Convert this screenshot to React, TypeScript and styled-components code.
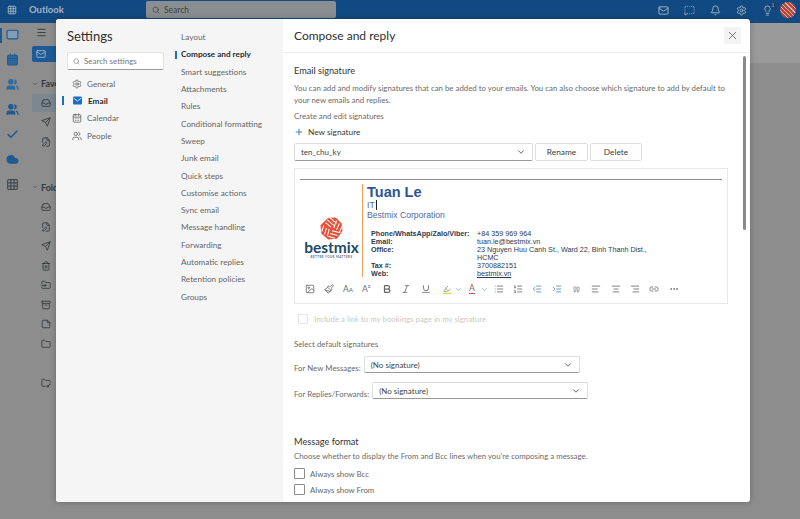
import React from 'react';
import styled, { createGlobalStyle } from 'styled-components';
import {
  AlignCenter, AlignLeft, AlignRight, Archive, Bell, Bold, CalendarDays, Check, ChevronDown, Cloud, FileEdit,
  Folder, FolderInput, FolderKey, Grid3x3, Highlighter, Image, IndentDecrease, IndentIncrease, Inbox, Italic,
  Lightbulb, Link2, List, ListOrdered, Mail, Menu, MessageSquareDashed, MoreHorizontal, Paintbrush, Plus, Quote,
  Search, Send, Settings, StickyNote, Trash2, Underline, Users, X,
} from 'lucide-react';

const GlobalStyle = createGlobalStyle`
  html, body {
    margin: 0;
    height: 100%;
    overflow: hidden;
    font-family: "Lato", "Open Sans", sans-serif;
  }
`;

const Page = styled('div')`
  background-color: #8c8d8c;
  display: flex;
  flex-direction: column;
  height: 519px;
  overflow: hidden;
  position: relative;
  width: 800px;
`;

const TopBar = styled('header')`
  align-items: flex-start;
  background-color: #114a82;
  color: #a9b6c4;
  display: flex;
  flex-shrink: 0;
  height: 23px;
`;

const AppGrid = styled('div')`
  display: flex;
  justify-content: center;
  padding-top: 5px;
  width: 24px;
`;

const Brand = styled('span')`
  color: #a3b3c4;
  font-size: 9.5px;
  font-weight: 700;
  line-height: 20px;
  margin-left: 5px;
  width: 117px;
`;

const TopSearch = styled('div')`
  align-items: center;
  background-color: #8b8e90;
  border-radius: 2px;
  color: #3d3f41;
  display: flex;
  font-size: 8.5px;
  gap: 4px;
  height: 17px;
  margin-top: 1px;
  padding-left: 6px;
  width: 184px;
`;

const TopActions = styled('div')`
  align-items: center;
  display: flex;
  gap: 15px;
  margin-left: auto;
  padding-right: 4px;
  padding-top: 2px;
`;

const BellBadge = styled('span')`
  display: flex;
  position: relative;

  &::after {
    background-color: #1d3f66;
    border-radius: 50%;
    color: #a9b6c4;
    content: '1';
    font-size: 5px;
    height: 7px;
    line-height: 7px;
    position: absolute;
    right: -4px;
    text-align: center;
    top: -3px;
    width: 7px;
  }
`;

const Avatar = styled('span')`
  background: repeating-linear-gradient(45deg, #b4483f 0 2px, #d9b3a8 2px 3px);
  border-radius: 50%;
  display: block;
  height: 16px;
  margin-left: -7.5px;
  width: 16px;
`;

const Workspace = styled('div')`
  display: flex;
  flex: 1;
`;

const Rail = styled('nav')`
  align-items: center;
  display: flex;
  flex-direction: column;
  gap: 10px;
  padding-top: 5px;
  position: relative;
  width: 24px;

  &::before {
    background-color: #1c5a94;
    content: '';
    height: 15px;
    left: 0;
    position: absolute;
    top: 5px;
    width: 1.5px;
  }
`;

const RailIcon = styled('span')<{ $color: string }>`
  color: ${ (props) => props.$color };
  display: flex;
  height: 15px;
`;

const FolderPane = styled('aside')`
  color: #33393d;
  display: flex;
  flex-direction: column;
  padding-left: 8px;
  padding-top: 2px;
  width: 120px;
`;

const Hamburger = styled('span')`
  display: flex;
  padding-left: 4px;
  padding-top: 2px;
`;

const NewMail = styled('div')`
  align-items: center;
  background-color: #1e5a96;
  border-radius: 2px;
  color: #aebfd0;
  display: flex;
  height: 16px;
  margin-top: 8px;
  padding-left: 4px;
  width: 60px;
`;

const GroupLabel = styled('div')<{ $top: number }>`
  align-items: center;
  display: flex;
  font-size: 9px;
  font-weight: 700;
  gap: 3px;
  margin-top: ${ (props) => props.$top }px;
`;

const SideRow = styled('div')<{ $selected?: boolean; $top?: number }>`
  align-items: center;
  background-color: ${ (props) => (props.$selected ? '#7d8790' : 'transparent') };
  border-radius: 2px;
  display: flex;
  height: 17.5px;
  margin-top: ${ (props) => props.$top ?? 2 }px;
  padding-left: 9px;
`;

const ReadingPane = styled('section')`
  display: flex;
  flex: 1;
  flex-direction: column;
`;

const ReadingStrip = styled('div')`
  background-color: #999a99;
  height: 40px;
  margin-left: auto;
  width: 70px;
`;

const Modal = styled('div')`
  background-color: #ffffff;
  border-radius: 3px;
  bottom: 17px;
  box-shadow: 0 0 6px rgba(0, 0, 0, 0.25);
  display: flex;
  left: 56px;
  overflow: hidden;
  position: absolute;
  top: 19px;
  width: 694px;
`;

const NavPane = styled('div')`
  background-color: #f5f5f5;
  display: flex;
  flex-shrink: 0;
  width: 227px;
`;

const PrimaryNav = styled('div')`
  box-sizing: border-box;
  display: flex;
  flex-direction: column;
  padding-left: 11px;
  padding-top: 8px;
  width: 119px;
`;

const SettingsTitle = styled('h1')`
  color: #2f2f2f;
  font-size: 13px;
  font-weight: 400;
  line-height: 18px;
  margin: 0 0 7px;
`;

const NavSearch = styled('div')`
  align-items: center;
  background-color: #ffffff;
  border: 1px solid #e3e3e3;
  border-bottom-color: #9b9b9b;
  border-radius: 2px;
  box-sizing: border-box;
  color: #777777;
  display: flex;
  font-size: 8px;
  gap: 4px;
  height: 18px;
  margin-bottom: 5px;
  padding-left: 5px;
  width: 97px;
`;

const NavItem = styled('div')<{ $active?: boolean }>`
  align-items: center;
  color: ${ (props) => (props.$active ? '#2b2b2b' : '#666666') };
  display: flex;
  font-size: 8.2px;
  font-weight: ${ (props) => (props.$active ? 700 : 400) };
  gap: 5px;
  height: 17.3px;
  padding-left: 5px;
  position: relative;

  &::before {
    background-color: #1a6fc4;
    content: '';
    display: ${ (props) => (props.$active ? 'block' : 'none') };
    height: 9px;
    left: -5px;
    position: absolute;
    top: 4px;
    width: 2px;
  }
`;

const SecondaryNav = styled('div')`
  display: flex;
  flex-direction: column;
  padding-top: 9.5px;
`;

const SubItem = styled('div')<{ $active?: boolean }>`
  align-items: center;
  color: ${ (props) => (props.$active ? '#2b2b2b' : '#666666') };
  display: flex;
  font-size: 8.2px;
  font-weight: ${ (props) => (props.$active ? 700 : 400) };
  height: 17.3px;
  padding-left: 6px;
  position: relative;

  &::before {
    background-color: #1a6fc4;
    content: '';
    display: ${ (props) => (props.$active ? 'block' : 'none') };
    height: 8px;
    left: 0;
    position: absolute;
    top: 5px;
    width: 2px;
  }
`;

const ContentPane = styled('main')`
  display: flex;
  flex: 1;
  flex-direction: column;
  min-width: 0;
`;

const ContentHeader = styled('div')`
  align-items: center;
  border-bottom: 1px solid #eeeeee;
  box-sizing: border-box;
  display: flex;
  flex-shrink: 0;
  height: 34px;
  justify-content: space-between;
  padding-left: 11px;
  padding-right: 9px;
`;

const ContentTitle = styled('h2')`
  color: #303030;
  font-size: 12px;
  font-weight: 400;
  margin: 0;
`;

const CloseButton = styled('button')`
  align-items: center;
  background-color: #f3f3f3;
  border: 0;
  color: #555555;
  display: flex;
  height: 17px;
  justify-content: center;
  padding: 0;
  width: 17px;
`;

const ScrollArea = styled('div')`
  flex: 1;
  overflow: hidden;
  padding-left: 11px;
  padding-top: 12px;
  position: relative;
`;

const ScrollThumb = styled('div')`
  background-color: #8a8a8a;
  border-radius: 2px;
  height: 174px;
  position: absolute;
  right: 4px;
  top: 3px;
  width: 3px;
`;

const SectionTitle = styled('h3')<{ $top?: number }>`
  color: #333333;
  font-size: 9.2px;
  font-weight: 400;
  line-height: 12px;
  margin: ${ (props) => props.$top ?? 0 }px 0 0;
`;

const BodyText = styled('p')<{ $top: number }>`
  color: #6b6b6b;
  font-size: 7.85px;
  line-height: 12px;
  margin: ${ (props) => props.$top }px 0 0;
  width: 432px;
`;

const NewSignature = styled('div')`
  align-items: center;
  color: #3a3a3a;
  display: flex;
  font-size: 8.3px;
  gap: 4px;
  height: 12px;
  margin-top: 4px;
`;

const SignatureBar = styled('div')`
  display: flex;
  gap: 2px;
  margin-top: 5px;
`;

const Dropdown = styled('div')<{ $width: number; $height?: number }>`
  align-items: center;
  background-color: #ffffff;
  border: 1px solid #dddddd;
  border-bottom-color: #9a9a9a;
  border-radius: 2px;
  box-sizing: border-box;
  color: #444444;
  display: flex;
  flex-shrink: 0;
  font-size: 8px;
  height: ${ (props) => props.$height ?? 18 }px;
  justify-content: space-between;
  padding: 0 6px;
  width: ${ (props) => props.$width }px;
`;

const Button = styled('button')<{ $width: number }>`
  background-color: #ffffff;
  border: 1px solid #dcdcdc;
  border-radius: 2px;
  color: #3d3d3d;
  font-family: inherit;
  font-size: 8.3px;
  height: 18px;
  padding: 0;
  width: ${ (props) => props.$width }px;
`;

const EditorBox = styled('div')`
  border: 1px solid #e8e8e8;
  box-sizing: border-box;
  height: 136px;
  margin-top: 7px;
  padding: 10px 5px 0;
  width: 434px;
`;

const Rule = styled('hr')`
  border: 0;
  border-top: 1px solid #8b8b8b;
  margin: 0;
`;

const SignatureBody = styled('div')`
  display: flex;
  height: 93px;
  margin-top: 4px;
`;

const LogoColumn = styled('div')`
  align-items: center;
  box-sizing: border-box;
  display: flex;
  flex-direction: column;
  padding-left: 1px;
  padding-top: 33px;
  width: 62px;

  svg {
    flex-shrink: 0;
  }
`;

const LogoWord = styled('span')`
  color: #1d4a68;
  font-size: 15.5px;
  font-weight: 700;
  line-height: 13px;
  margin-top: 1px;
`;

const LogoTag = styled('span')`
  color: #5a6b78;
  font-size: 3px;
  font-weight: 700;
  letter-spacing: 0.4px;
  line-height: 4px;
  margin-top: 1px;
  white-space: nowrap;
`;

const Details = styled('div')`
  border-left: 1px solid #ee9a5a;
  padding-left: 4px;
`;

const PersonName = styled('div')`
  color: #2f5496;
  font-family: "Liberation Sans", sans-serif;
  font-size: 14.5px;
  font-weight: 700;
  line-height: 16px;
`;

const PersonLine = styled('div')`
  color: #4f6a9f;
  font-family: "Liberation Sans", sans-serif;
  font-size: 8.6px;
  line-height: 10px;
`;

const Caret = styled('span')`
  border-left: 1px solid #222222;
  margin-left: 1px;
`;

const ContactGrid = styled('dl')`
  color: #2d3a52;
  display: grid;
  font-family: "Liberation Sans", sans-serif;
  font-size: 7.2px;
  grid-template-columns: 106px 178px;
  line-height: 8px;
  margin: 10px 0 0 4px;
`;

const ContactKey = styled('dt')`
  font-weight: 700;
`;

const ContactValue = styled('dd')`
  margin: 0;
`;

const ContactLink = styled('span')`
  text-decoration: underline;
`;

const EditorTools = styled('div')`
  align-items: center;
  color: #6a6a6a;
  display: flex;
  height: 14px;
  margin-top: 5px;
  padding-left: 5px;
`;

const Tool = styled('span')<{ $width: number }>`
  align-items: center;
  display: flex;
  flex-shrink: 0;
  width: ${ (props) => props.$width }px;
`;

const ToolLetter = styled('span')<{ $bar?: string }>`
  border-bottom: ${ (props) => (props.$bar ? `1.5px solid ${ props.$bar }` : '0') };
  color: #6a6a6a;
  font-size: 8.5px;
  line-height: 9px;
  white-space: nowrap;
`;

const SwatchIcon = styled('span')<{ $bar: string }>`
  border-bottom: 1.5px solid ${ (props) => props.$bar };
  display: flex;
`;

const SmallRaised = styled('sup')`
  font-size: 5px;
  line-height: 0;
`;

const SmallLetter = styled('span')`
  font-size: 6.5px;
`;

const BookingRow = styled('div')`
  align-items: center;
  color: #c9c9c9;
  display: flex;
  font-size: 7.85px;
  gap: 6px;
  margin-top: 10px;
  padding-left: 4px;
`;

const CheckBox = styled('span')<{ $muted?: boolean }>`
  border: 1px solid ${ (props) => (props.$muted ? '#e6e6e6' : '#8a8a8a') };
  border-radius: 1px;
  box-sizing: border-box;
  display: block;
  flex-shrink: 0;
  height: ${ (props) => (props.$muted ? 10 : 11) }px;
  width: ${ (props) => (props.$muted ? 10 : 11) }px;
`;

const SelectRow = styled('div')<{ $top: number }>`
  color: #6b6b6b;
  display: flex;
  font-size: 7.85px;
  gap: 3px;
  margin-top: ${ (props) => props.$top }px;
`;

const SelectLabel = styled('span')`
  line-height: 12px;
  padding-top: 6px;
`;

const ChoiceRow = styled('div')<{ $top: number }>`
  align-items: center;
  color: #666666;
  display: flex;
  font-size: 7.85px;
  gap: 5px;
  margin-top: ${ (props) => props.$top }px;
`;

const LogoMark: React.FC = () => (
  <svg width='23' height='23' viewBox='0 0 25 25'>
    <path d='M9 1.5 17 1 23 7 24 15 18.5 23 9 24 2 18 1 9Z' fill='#e8503a' stroke='#e8503a' strokeWidth='1' strokeLinejoin='round' />
    <g stroke='#ffffff' strokeWidth='1.1' fill='none'>
      <path d='M8 3 15 9M6 6l6 5M11 1l7 6' />
      <path d='M18 4 15 12M21 7l-3 7M24 10l-3 7' />
      <path d='M22 17l-9-2M19 20l-8-2M16 23l-7-2' />
      <path d='M8 21 10 13M5 19l2-7M2 16l2-7' />
    </g>
  </svg>
);

const MailFilled: React.FC = () => (
  <svg width='11' height='11' viewBox='0 0 11 11'>
    <rect x='1' y='1.5' width='9' height='8' rx='1' fill='#1a6fc4' />
    <path d='M1.5 3 5.5 6 9.5 3' stroke='#ffffff' strokeWidth='0.8' fill='none' />
  </svg>
);

const railIcons = [
  { icon: <Mail size={13} fill='#7f9db8' />, color: '#1f5a91' },
  { icon: <CalendarDays size={13} fill='#2c6a9e' />, color: '#1f5a91' },
  { icon: <Users size={13} fill='#2c6a9e' />, color: '#2c6a9e' },
  { icon: <Users size={13} fill='#1f5a91' />, color: '#1f5a91' },
  { icon: <Check size={13} strokeWidth={3} />, color: '#1f5a91' },
  { icon: <Cloud size={13} fill='#1f5a91' />, color: '#1f5a91' },
  { icon: <Grid3x3 size={13} />, color: '#43484d' },
];

const folderIcons = [Inbox, FileEdit, Send, Trash2, FolderInput, Archive, StickyNote, Folder];

const subItems = [
  'Layout', 'Compose and reply', 'Smart suggestions', 'Attachments', 'Rules', 'Conditional formatting', 'Sweep',
  'Junk email', 'Quick steps', 'Customise actions', 'Sync email', 'Message handling', 'Forwarding',
  'Automatic replies', 'Retention policies', 'Groups',
];

const tools = [
  { icon: <Image size={10} />, width: 19 },
  { icon: <Paintbrush size={10} />, width: 19 },
  { icon: <ToolLetter>A<SmallLetter>A</SmallLetter></ToolLetter>, width: 19 },
  { icon: <ToolLetter>A<SmallRaised>o</SmallRaised></ToolLetter>, width: 20 },
  { icon: <Bold size={10} strokeWidth={3} />, width: 19 },
  { icon: <Italic size={10} />, width: 20 },
  { icon: <Underline size={10} />, width: 22 },
  { icon: <SwatchIcon $bar='#e6d800'><Highlighter size={8} color='#777777' /></SwatchIcon>, width: 11.5 },
  { icon: <ChevronDown size={7} color='#5a87b5' />, width: 14.5 },
  { icon: <ToolLetter $bar='#d9483b'>A</ToolLetter>, width: 11.5 },
  { icon: <ChevronDown size={7} color='#5a87b5' />, width: 13.5 },
  { icon: <List size={10} />, width: 19 },
  { icon: <ListOrdered size={10} />, width: 19 },
  { icon: <IndentDecrease size={10} color='#5a87b5' />, width: 20 },
  { icon: <IndentIncrease size={10} color='#5a87b5' />, width: 20.5 },
  { icon: <Quote size={7} />, width: 18.5 },
  { icon: <AlignLeft size={10} />, width: 20 },
  { icon: <AlignCenter size={10} />, width: 19 },
  { icon: <AlignRight size={10} />, width: 19 },
  { icon: <Link2 size={10} />, width: 20 },
  { icon: <MoreHorizontal size={10} />, width: 12 },
];

const App: React.FC = () => {
  return (
    <Page>
      <GlobalStyle />
      <TopBar>
        <AppGrid><Grid3x3 size={10} /></AppGrid>
        <Brand>Outlook</Brand>
        <TopSearch><Search size={8} />Search</TopSearch>
        <TopActions>
          <Mail size={11} />
          <MessageSquareDashed size={11} />
          <Bell size={11} />
          <Settings size={11} />
          <BellBadge><Lightbulb size={11} /></BellBadge>
          <Avatar />
        </TopActions>
      </TopBar>
      <Workspace>
        <Rail>
          {
            railIcons.map((item, index) => (
              <RailIcon key={ index } $color={ item.color }>{ item.icon }</RailIcon>
            ))
          }
        </Rail>
        <FolderPane>
          <Hamburger><Menu size={11} /></Hamburger>
          <NewMail><Mail size={10} /></NewMail>
          <GroupLabel $top={16}><ChevronDown size={6} />Favorites</GroupLabel>
          <SideRow $selected $top={5}><Inbox size={10} /></SideRow>
          <SideRow><Send size={10} /></SideRow>
          <SideRow><FileEdit size={10} /></SideRow>
          <GroupLabel $top={31}><ChevronDown size={6} />Folders</GroupLabel>
          {
            folderIcons.map((Icon, index) => (
              <SideRow key={ index } $top={ index === 0 ? 6 : 2 }><Icon size={10} /></SideRow>
            ))
          }
          <SideRow $top={21.5}><FolderKey size={10} /></SideRow>
        </FolderPane>
        <ReadingPane>
          <ReadingStrip />
        </ReadingPane>
      </Workspace>
      <Modal>
        <NavPane>
          <PrimaryNav>
            <SettingsTitle>Settings</SettingsTitle>
            <NavSearch><Search size={7} />Search settings</NavSearch>
            <NavItem><Settings size={10} />General</NavItem>
            <NavItem $active><MailFilled />Email</NavItem>
            <NavItem><CalendarDays size={10} />Calendar</NavItem>
            <NavItem><Users size={10} />People</NavItem>
          </PrimaryNav>
          <SecondaryNav>
            {
              subItems.map((item) => (
                <SubItem key={ item } $active={ item === 'Compose and reply' }>{ item }</SubItem>
              ))
            }
          </SecondaryNav>
        </NavPane>
        <ContentPane>
          <ContentHeader>
            <ContentTitle>Compose and reply</ContentTitle>
            <CloseButton aria-label='Close'><X size={13} strokeWidth={1.4} /></CloseButton>
          </ContentHeader>
          <ScrollArea>
            <ScrollThumb />
            <SectionTitle>Email signature</SectionTitle>
            <BodyText $top={5}>
              You can add and modify signatures that can be added to your emails. You can also choose which signature to add by default to your new emails and replies.
            </BodyText>
            <BodyText $top={4}>Create and edit signatures</BodyText>
            <NewSignature><Plus size={10} color='#1a6fc4' />New signature</NewSignature>
            <SignatureBar>
              <Dropdown $width={239}>ten_chu_ky<ChevronDown size={10} /></Dropdown>
              <Button $width={53}>Rename</Button>
              <Button $width={52}>Delete</Button>
            </SignatureBar>
            <EditorBox>
              <Rule />
              <SignatureBody>
                <LogoColumn>
                  <LogoMark />
                  <LogoWord>bestmix</LogoWord>
                  <LogoTag>BETTER YOUR MATTERS</LogoTag>
                </LogoColumn>
                <Details>
                  <PersonName>Tuan Le</PersonName>
                  <PersonLine>IT<Caret /></PersonLine>
                  <PersonLine>Bestmix Corporation</PersonLine>
                  <ContactGrid>
                    <ContactKey>Phone/WhatsApp/Zalo/Viber:</ContactKey>
                    <ContactValue>+84 359 969 964</ContactValue>
                    <ContactKey>Email:</ContactKey>
                    <ContactValue>tuan.le@bestmix.vn</ContactValue>
                    <ContactKey>Office:</ContactKey>
                    <ContactValue>23 Nguyen Huu Canh St., Ward 22, Binh Thanh Dist., HCMC</ContactValue>
                    <ContactKey>Tax #:</ContactKey>
                    <ContactValue>3700882151</ContactValue>
                    <ContactKey>Web:</ContactKey>
                    <ContactValue><ContactLink>bestmix.vn</ContactLink></ContactValue>
                  </ContactGrid>
                </Details>
              </SignatureBody>
              <EditorTools>
                {
                  tools.map((tool, index) => (
                    <Tool key={ index } $width={ tool.width }>{ tool.icon }</Tool>
                  ))
                }
              </EditorTools>
            </EditorBox>
            <BookingRow><CheckBox $muted />Include a link to my bookings page in my signature</BookingRow>
            <BodyText $top={14}>Select default signatures</BodyText>
            <SelectRow $top={6}>
              <SelectLabel>For New Messages:</SelectLabel>
              <Dropdown $width={216} $height={17}>(No signature)<ChevronDown size={10} /></Dropdown>
            </SelectRow>
            <SelectRow $top={8}>
              <SelectLabel>For Replies/Forwards:</SelectLabel>
              <Dropdown $width={216} $height={17}>(No signature)<ChevronDown size={10} /></Dropdown>
            </SelectRow>
            <SectionTitle $top={36}>Message format</SectionTitle>
            <BodyText $top={2}>Choose whether to display the From and Bcc lines when you're composing a message.</BodyText>
            <ChoiceRow $top={6}><CheckBox />Always show Bcc</ChoiceRow>
            <ChoiceRow $top={5}><CheckBox />Always show From</ChoiceRow>
          </ScrollArea>
        </ContentPane>
      </Modal>
    </Page>
  );
};

export default App;
